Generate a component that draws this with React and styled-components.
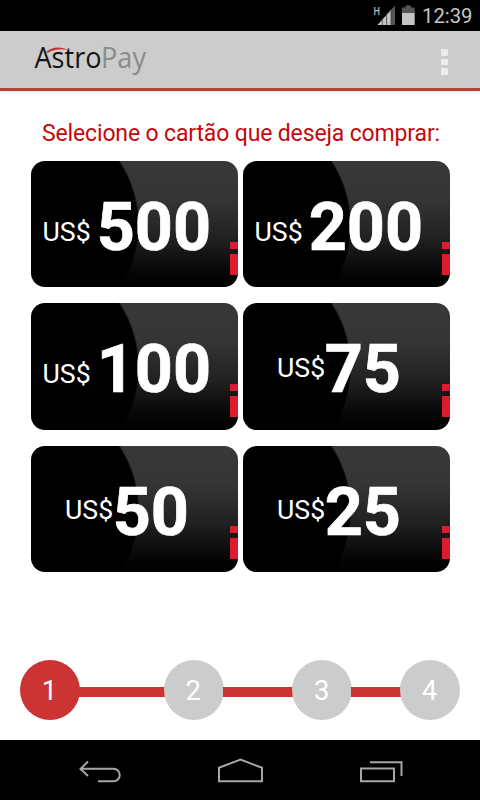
import React from "react";
import styled, { createGlobalStyle } from "styled-components";

const cards = [
  { value: "500", left: 11.5, gap: 6, drop: 55.5 },
  { value: "200", left: 11.5, gap: 6, drop: 55.5 },
  { value: "100", left: 11.5, gap: 6, drop: 55.5 },
  { value: "75", left: 34, gap: -0.5, drop: 49.3 },
  { value: "50", left: 34, gap: -0.5, drop: 49.3 },
  { value: "25", left: 34, gap: -0.5, drop: 49.3 },
];

const App = () => {
  return (
    <Screen>
      <GlobalStyle />
      <StatusBar>
        <StatusIcons />
        <Clock>12:39</Clock>
      </StatusBar>
      <ActionBar>
        <Logo />
        <Overflow>
          <span />
          <span />
          <span />
        </Overflow>
      </ActionBar>
      <Content>
        <Title>Selecione o cartão que deseja comprar:</Title>
        <CardGrid>
          {cards.map((card) => (
            <Card key={card.value} $left={card.left}>
              <Currency $drop={card.drop} $gap={card.gap}>
                US$
              </Currency>
              <Amount>{card.value}</Amount>
              <Mark>
                <i />
                <b />
              </Mark>
            </Card>
          ))}
        </CardGrid>
        <Steps>
          <Step $active>1</Step>
          <Line $width={84} />
          <Step>2</Step>
          <Line $width={69} />
          <Step>3</Step>
          <Line $width={48} />
          <Step>4</Step>
        </Steps>
      </Content>
      <NavBar>
        <NavIcon viewBox="76 756 48 30">
          <path d="M88 761.5 L80.5 769 L88 776 M81 768.8 H113.5 A6.2 6.2 0 0 1 113.5 781.3 H98" />
        </NavIcon>
        <NavIcon viewBox="216.5 756 48 30">
          <path d="M218.5 781.3 V767.8 L240 759.5 L261.5 767.8 V781.3 Z" />
        </NavIcon>
        <NavIcon viewBox="357 756 48 30">
          <path d="M361 768.5 H394 V781.3 H361 Z M370 762.3 H401.5 V776" />
        </NavIcon>
      </NavBar>
    </Screen>
  );
};

export default App;

const StatusIcons = () => (
  <svg width="46" height="31" viewBox="372 0 46 31">
    <text
      x="373.5"
      y="14.8"
      fontFamily="Roboto"
      fontSize="11.5"
      fontWeight="500"
      fill="#b8b8b8"
      textLength="6.5"
      lengthAdjust="spacingAndGlyphs"
    >
      H
    </text>
    <path d="M377.5 25 L395 5.5 V25 Z" fill="#555" />
    <path d="M377.5 25 L391 10 V25 Z" fill="#c4c4c4" />
    <path d="M382.3 18 V25 M386.5 13 V25 M391 9 V25" stroke="#444" strokeWidth="0.8" />
    <path d="M402 7.5 H405.5 V5.5 H411 V7.5 H414.7 V13 H402 Z" fill="#555" />
    <path d="M402 13 H414.7 V25 H402 Z" fill="#c4c4c4" />
  </svg>
);

const Logo = () => (
  <svg width="120" height="52" viewBox="33 34 120 52">
    <g fontFamily="Open Sans, sans-serif" fontSize="28.5">
      <text x="34.5" y="68.3" fill="#161616" textLength="67" lengthAdjust="spacingAndGlyphs">
        Astro
      </text>
      <text x="101" y="68.3" fill="#8b8b8b" textLength="45" lengthAdjust="spacingAndGlyphs">
        Pay
      </text>
    </g>
    <path d="M46.5 51.5 Q56 44.5 68 49.8 Q56 47.8 47.5 53 Z" fill="#c8322d" />
  </svg>
);

const GlobalStyle = createGlobalStyle`
  body {
    margin: 0;
    background: white;
  }
`;

const Screen = styled.div`
  width: 480px;
  height: 800px;
  display: flex;
  flex-direction: column;
  overflow: hidden;
  font-family: Roboto, sans-serif;
`;

const StatusBar = styled.div`
  height: 31px;
  display: flex;
  justify-content: flex-end;
  padding-right: 8px;
  background: black;
`;

const Clock = styled.span`
  width: 50px;
  margin-left: 4px;
  font-size: 20.3px;
  line-height: 32px;
  color: #c4c4c4;
`;

const ActionBar = styled.header`
  box-sizing: border-box;
  height: 60px;
  flex: none;
  display: flex;
  justify-content: space-between;
  padding: 3px 32px 0 33px;
  background: #cccccc;
  border-bottom: 3px solid #b8423a;
  box-shadow: 0 1px 3px rgba(0, 0, 0, 0.12);
`;

const Overflow = styled.div`
  width: 7px;
  display: flex;
  flex-direction: column;
  gap: 3px;
  padding-top: 15px;

  span {
    height: 6.5px;
    background: #ebebeb;
  }
`;

const Content = styled.main`
  flex: 1;
  display: flex;
  flex-direction: column;
`;

const Title = styled.h1`
  margin: 27px 0 0 2px;
  font-size: 23px;
  font-weight: 400;
  letter-spacing: -0.15px;
  line-height: 31px;
  text-align: center;
  white-space: nowrap;
  color: #c4090d;
`;

const CardGrid = styled.div`
  display: grid;
  grid-template-columns: 207px 207px;
  gap: 16px 5px;
  padding: 12px 0 0 31px;
`;

const Card = styled.div`
  position: relative;
  box-sizing: border-box;
  height: 126.4px;
  display: flex;
  align-items: flex-start;
  padding-left: ${(props) => props.$left}px;
  overflow: hidden;
  border-radius: 14px;
  color: white;
  background:
    radial-gradient(circle at -9px 64px, black 115.5px, transparent 117.5px),
    linear-gradient(#383838 0%, #353535 30%, #222222 60%, #060606 88%, black 100%);
`;

const Currency = styled.span`
  margin-top: ${(props) => props.$drop}px;
  margin-right: ${(props) => props.$gap}px;
  font-size: 26.7px;
  line-height: 30px;
`;

const Amount = styled.span`
  margin-top: 31px;
  font-size: 66.5px;
  font-weight: 700;
  line-height: 70px;
  -webkit-text-stroke: 0.7px white;
`;

const Mark = styled.div`
  position: absolute;
  right: 0;
  top: 80.5px;
  width: 8.5px;

  i,
  b {
    display: block;
    background: #dc1c2e;
  }

  i {
    height: 7px;
    margin-bottom: 5px;
  }

  b {
    height: 21px;
  }
`;

const Steps = styled.div`
  display: flex;
  align-items: center;
  margin: auto 20px 20px;
`;

const Step = styled.div`
  width: 60px;
  height: 60px;
  flex: none;
  border-radius: 50%;
  font-size: 27.5px;
  line-height: 61px;
  text-align: center;
  text-indent: -1px;
  color: white;
  background: ${(props) => (props.$active ? "#cc3333" : "#cccccc")};
`;

const Line = styled.div`
  width: ${(props) => props.$width}px;
  height: 10px;
  flex: 1 1 auto;
  margin: 3px -1px 0;
  background: #cc3333;
`;

const NavBar = styled.nav`
  box-sizing: border-box;
  height: 60px;
  flex: none;
  display: flex;
  justify-content: space-between;
  padding: 16px 75px 0 76px;
  background: black;
`;

const NavIcon = styled.svg`
  width: 48px;
  height: 30px;
  fill: none;
  stroke: #a6a6a6;
  stroke-width: 2;
`;
